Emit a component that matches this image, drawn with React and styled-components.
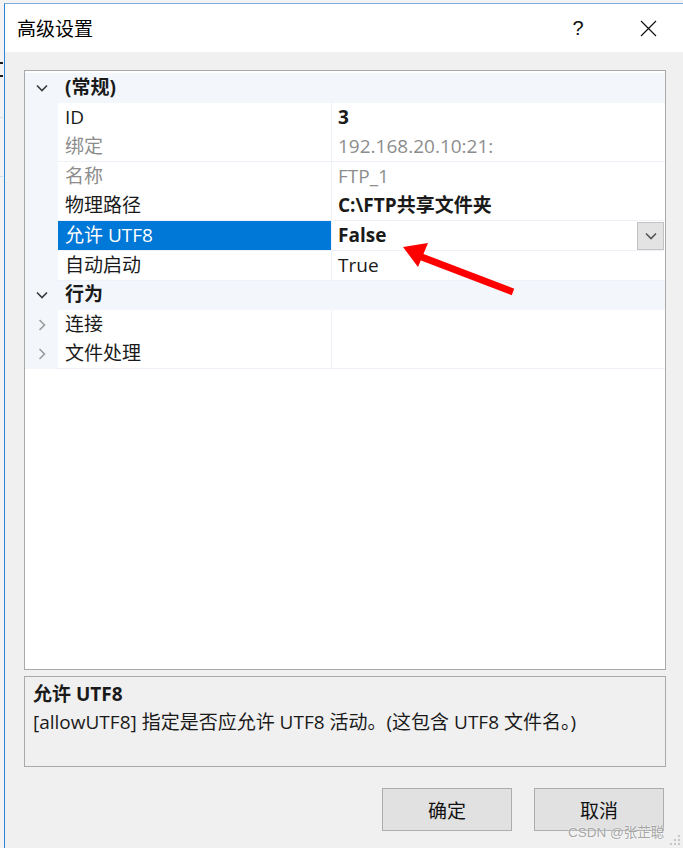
import React from 'react';
import styled, { createGlobalStyle } from 'styled-components';

const GlobalStyle = createGlobalStyle`
  html, body {
    margin: 0;
    padding: 0;
    background: #f2f2f2;
    overflow: hidden;
  }
  * { box-sizing: border-box; }
`;

const FONT = `"Open Sans", "Noto Sans CJK SC", sans-serif`;

const Page = styled.div`
  position: relative;
  width: 683px;
  height: 848px;
  padding: 3px 0 0 4px;
  font-family: ${FONT};
  background:
    linear-gradient(#1a1a1a, #1a1a1a) 0 62px / 3px 2px no-repeat,
    linear-gradient(#1a1a1a, #1a1a1a) 0 75px / 3px 2px no-repeat,
    linear-gradient(#cfe0f0, #cfe0f0) 0 117px / 3px 1px no-repeat,
    linear-gradient(#cfe0f0, #cfe0f0) 0 176px / 3px 1px no-repeat,
    #f3f3f3;
`;

const Window = styled.div`
  height: 100%;
  border-top: 1px solid #7fb0df;
  border-left: 1px solid #2a86d5;
  background: #f0f0f0;
  display: flex;
  flex-direction: column;
`;

const TitleBar = styled.div`
  height: 48px;
  background: #fff;
  display: flex;
  align-items: center;
  padding-left: 12px;
`;

const Title = styled.div`
  flex: 1;
  font-size: 19px;
  color: #000;
`;

const CaptionButton = styled.div`
  width: 46px;
  height: 48px;
  display: flex;
  align-items: center;
  justify-content: center;
  color: #111;
  font-family: "Liberation Sans", sans-serif;
  font-size: 20px;
  margin-right: ${p => p.$mr || 0}px;
`;

const Body = styled.div`
  flex: 1;
  padding: 18px 0 0 19px;
  display: flex;
  flex-direction: column;
`;

const Grid = styled.div`
  width: 642px;
  height: 600px;
  border: 1px solid #a9a9a9;
  background: #fff;
  padding-top: 2px;
`;

const Row = styled.div`
  display: grid;
  grid-template-columns: 33px 274px 1fr;
  height: 29.6px;
  background: #f3f6fb;
  font-size: 19px;
  line-height: 29px;
`;

const CatRow = styled(Row)`
  grid-template-columns: 33px 1fr;
`;

const Gutter = styled.div`
  display: flex;
  align-items: center;
  justify-content: center;
  padding-left: 1px;
`;

const CatLabel = styled.div`
  font-weight: bold;
  color: #1a1a1a;
  padding-left: 7px;
`;

const Label = styled.div`
  padding-left: 7px;
  border-bottom: 1px solid #eef2f8;
  border-right: 1px solid #eef2f8;
  background: ${p => (p.$selected ? '#0078d7' : '#fff')};
  color: ${p => (p.$selected ? '#fff' : p.$muted ? '#8d8d8d' : '#1a1a1a')};
  white-space: nowrap;
`;

const Value = styled.div`
  display: flex;
  align-items: stretch;
  justify-content: space-between;
  padding-left: 6px;
  background: #fff;
  border-bottom: 1px solid #eef2f8;
  color: ${p => (p.$muted ? '#8d8d8d' : '#1a1a1a')};
  font-weight: ${p => (p.$bold ? 'bold' : 'normal')};
  white-space: nowrap;
`;

const DropButton = styled.div`
  width: 27px;
  margin: 1px 1px 0 0;
  background: #e3e3e3;
  border: 1px solid #c2c2c2;
  display: flex;
  align-items: center;
  justify-content: center;
`;

const Description = styled.div`
  width: 642px;
  height: 91px;
  margin-top: 6px;
  border: 1px solid #a9a9a9;
  padding: 3px 8px;
  font-size: 19px;
  line-height: 28px;
  color: #1a1a1a;
`;

const DescTitle = styled.div`
  font-weight: bold;
`;

const Buttons = styled.div`
  width: 640px;
  display: flex;
  justify-content: flex-end;
  gap: 22px;
  margin-top: 21px;
`;

const Button = styled.div`
  width: 130px;
  height: 43px;
  background: #e1e1e1;
  border: 1px solid #adadad;
  display: flex;
  align-items: center;
  justify-content: center;
  font-size: 19px;
  color: #111;
`;

const Watermark = styled.div`
  position: absolute;
  left: 568px;
  top: 821px;
  font-size: 13.5px;
  font-family: "Liberation Sans", "Noto Sans CJK SC", sans-serif;
  color: rgba(150, 150, 150, 0.85);
  text-shadow: 0 0 2px #fff;
`;

const Overlay = styled.svg`
  position: absolute;
  left: 0;
  top: 0;
  pointer-events: none;
`;

const Chevron = ({ dir, color }) => (
  <svg width="12" height="12" viewBox="0 0 12 12">
    <path
      d={dir === 'down' ? 'M1 3.5 L6 8.5 L11 3.5' : 'M3.5 1 L8.5 6 L3.5 11'}
      fill="none"
      stroke={color}
      strokeWidth="1.6"
    />
  </svg>
);

const Category = ({ label, open = true }) => (
  <CatRow>
    <Gutter>
      <Chevron dir={open ? 'down' : 'right'} color="#3a3a3a" />
    </Gutter>
    <CatLabel>{label}</CatLabel>
  </CatRow>
);

const Prop = ({ label, value, muted, bold, selected, expandable, dropdown }) => (
  <Row>
    <Gutter>{expandable && <Chevron dir="right" color="#9a9a9a" />}</Gutter>
    <Label $muted={muted} $selected={selected}>{label}</Label>
    <Value $muted={muted} $bold={bold}>
      <span>{value}</span>
      {dropdown && (
        <DropButton>
          <Chevron dir="down" color="#555" />
        </DropButton>
      )}
    </Value>
  </Row>
);

export default function App() {
  return (
    <>
      <GlobalStyle />
      <Page>
        <Window>
          <TitleBar>
            <Title>高级设置</Title>
            <CaptionButton $mr={24}>?</CaptionButton>
            <CaptionButton $mr={12}>
              <svg width="17" height="17" viewBox="0 0 17 17">
                <path d="M1 1 L16 16 M16 1 L1 16" stroke="#111" strokeWidth="1.2" />
              </svg>
            </CaptionButton>
          </TitleBar>
          <Body>
            <Grid>
              <Category label="(常规)" />
              <Prop label="ID" value="3" bold />
              <Prop label="绑定" value="192.168.20.10:21:" muted />
              <Prop label="名称" value="FTP_1" muted />
              <Prop label="物理路径" value="C:\FTP共享文件夹" bold />
              <Prop label="允许 UTF8" value="False" bold selected dropdown />
              <Prop label="自动启动" value="True" />
              <Category label="行为" />
              <Prop label="连接" value="" expandable />
              <Prop label="文件处理" value="" expandable />
            </Grid>
            <Description>
              <DescTitle>允许 UTF8</DescTitle>
              <div>[allowUTF8] 指定是否应允许 UTF8 活动。(这包含 UTF8 文件名。)</div>
            </Description>
            <Buttons>
              <Button>确定</Button>
              <Button>取消</Button>
            </Buttons>
          </Body>
        </Window>
        <Watermark>CSDN @张芷聪</Watermark>
        <Overlay width="683" height="848">
          <line x1="419" y1="256" x2="513" y2="292" stroke="#f00" strokeWidth="7" />
          <polygon points="403,247 428,243 418,267" fill="#f00" />
          <g fill="#c8c8c8">
            <rect x="678" y="835" width="2" height="2" />
            <rect x="674" y="839" width="2" height="2" />
            <rect x="678" y="839" width="2" height="2" />
            <rect x="670" y="843" width="2" height="2" />
            <rect x="674" y="843" width="2" height="2" />
            <rect x="678" y="843" width="2" height="2" />
          </g>
        </Overlay>
      </Page>
    </>
  );
}
